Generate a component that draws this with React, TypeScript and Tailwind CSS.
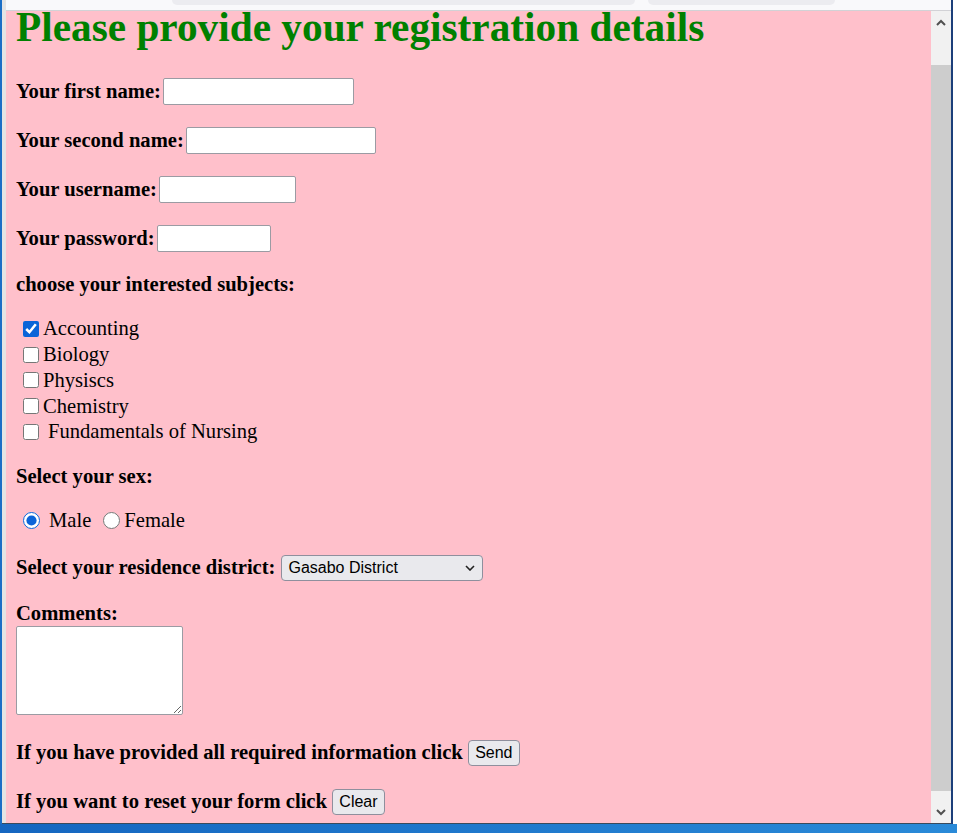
import { useState } from "react";

const subjects = ["Accounting", "Biology", "Physiscs", "Chemistry"];

function Chevron({ up }: { up?: boolean }) {
  return (
    <svg width="10" height="7" viewBox="0 0 10 7">
      <polyline
        points={up ? "1,6 5,2 9,6" : "1,1 5,5 9,1"}
        fill="none"
        stroke="#505050"
        strokeWidth="2"
      />
    </svg>
  );
}

export default function App() {
  const [checked, setChecked] = useState<string[]>(["Accounting"]);
  const [sex, setSex] = useState("male");

  const toggle = (s: string) =>
    setChecked((c) => (c.includes(s) ? c.filter((x) => x !== s) : [...c, s]));

  return (
    <div className="w-[957px] h-[833px] overflow-hidden flex flex-col bg-[#1a6ec6] font-['Liberation_Serif','Times_New_Roman',serif] text-black">
      <div className="h-[824px] flex bg-white">
        {/* window frame, left */}
        <div className="w-[2px] bg-[#1a6ec6]" />
        <div className="w-[4px] bg-[#e4e4e4] border-b border-[#3a4a5c]" />

        <div className="w-[945px] flex flex-col">
          {/* browser tab strip */}
          <div className="h-[11px] bg-[#f9f9fb] border-b border-[#d2d2d6] flex items-start">
            <div className="ml-[166px] w-[463px] h-[5px] bg-[#ececf0] rounded-b-[5px]" />
            <div className="ml-[13px] w-[187px] h-[5px] bg-[#ececf0] rounded-b-[5px]" />
          </div>

          <div className="flex-1 flex border-b border-[#3a4a5c]">
            {/* page */}
            <main className="w-[925px] bg-[#ffc0cb] px-[10px] flex flex-col">
              <h1 className="h-[32px] leading-[32px] text-[41.3px] font-bold text-[#008000] whitespace-nowrap">
                Please provide your registration details
              </h1>

              <div className="mt-[34px] h-[29px] flex items-center text-[20.6px] font-bold">
                <span>Your first name:</span>
                <input type="text" className="ml-[2px] w-[191px] h-[27px] bg-white border border-[#9b9ba3] rounded-[2px]" />
              </div>
              <div className="mt-[20px] h-[29px] flex items-center text-[20.6px] font-bold">
                <span>Your second name:</span>
                <input type="text" className="ml-[2px] w-[190px] h-[27px] bg-white border border-[#9b9ba3] rounded-[2px]" />
              </div>
              <div className="mt-[20px] h-[29px] flex items-center text-[20.6px] font-bold">
                <span>Your username:</span>
                <input type="text" className="ml-[2px] w-[137px] h-[27px] bg-white border border-[#9b9ba3] rounded-[2px]" />
              </div>
              <div className="mt-[20px] h-[29px] flex items-center text-[20.6px] font-bold">
                <span>Your password:</span>
                <input type="password" className="ml-[2px] w-[114px] h-[27px] bg-white border border-[#9b9ba3] rounded-[2px]" />
              </div>

              <p className="mt-[20px] h-[23px] leading-[23px] text-[20.6px] font-bold">
                choose your interested subjects:
              </p>

              <div className="mt-[20px] flex flex-col text-[20.6px]">
                {subjects.map((s) => (
                  <label key={s} className="h-[25.75px] flex items-center">
                    <input
                      type="checkbox"
                      checked={checked.includes(s)}
                      onChange={() => toggle(s)}
                      className="ml-[7px] mr-[4px] w-[16px] h-[16px] accent-[#0b64d8]"
                    />
                    <span>{s}</span>
                  </label>
                ))}
                <label className="h-[25.75px] flex items-center">
                  <input
                    type="checkbox"
                    checked={checked.includes("Fundamentals of Nursing")}
                    onChange={() => toggle("Fundamentals of Nursing")}
                    className="ml-[7px] mr-[9px] w-[16px] h-[16px] accent-[#0b64d8]"
                  />
                  <span>Fundamentals of Nursing</span>
                </label>
              </div>

              <p className="mt-[20px] h-[23px] leading-[23px] text-[20.6px] font-bold">Select your sex:</p>

              <div className="mt-[20px] h-[26px] flex items-center text-[20.6px]">
                <input
                  type="radio"
                  name="sex"
                  checked={sex === "male"}
                  onChange={() => setSex("male")}
                  className="ml-[7px] w-[17px] h-[17px] accent-[#0b64d8]"
                />
                <span className="ml-[9px]">Male</span>
                <input
                  type="radio"
                  name="sex"
                  checked={sex === "female"}
                  onChange={() => setSex("female")}
                  className="ml-[12px] w-[17px] h-[17px] accent-[#0b64d8]"
                />
                <span className="ml-[4px]">Female</span>
              </div>

              <div className="mt-[20px] h-[28px] flex items-center text-[20.6px]">
                <span className="font-bold">Select your residence district:</span>
                <div className="ml-[6px] w-[202px] h-[26px] relative">
                  <select className="block w-full h-full appearance-none bg-[#e9e9ed] border border-[#8f8f9d] rounded-[4px] pl-[6px] text-[16px] leading-[24px] font-['Liberation_Sans',Arial,sans-serif] text-black">
                    <option>Gasabo District</option>
                    <option>Kicukiro District</option>
                    <option>Nyarugenge District</option>
                  </select>
                  <span className="absolute right-[8px] top-[10px] pointer-events-none">
                    <svg width="10" height="6" viewBox="0 0 10 6">
                      <polyline points="1,1 5,5 9,1" fill="none" stroke="#222" strokeWidth="1.6" />
                    </svg>
                  </span>
                </div>
              </div>

              <p className="mt-[20px] h-[23px] leading-[23px] text-[20.6px] font-bold">Comments:</p>
              <textarea className="block mt-[1.25px] w-[167px] h-[89px] bg-white border border-[#9b9ba3] rounded-[2px] resize" />

              <div className="mt-[23px] h-[29px] flex items-center text-[20.6px]">
                <span className="font-bold">If you have provided all required information click</span>
                <button className="ml-[5px] w-[52px] h-[26px] bg-[#e9e9ed] border border-[#8f8f9d] rounded-[4px] text-[16px] font-['Liberation_Sans',Arial,sans-serif]">
                  Send
                </button>
              </div>
              <div className="mt-[20px] h-[29px] flex items-center text-[20.6px]">
                <span className="font-bold">If you want to reset your form click</span>
                <button className="ml-[5px] w-[53px] h-[26px] bg-[#e9e9ed] border border-[#8f8f9d] rounded-[4px] text-[16px] font-['Liberation_Sans',Arial,sans-serif]">
                  Clear
                </button>
              </div>
            </main>

            {/* scrollbar */}
            <div className="w-[20px] bg-[#f1f1f1] flex flex-col">
              <div className="h-[54px] flex justify-center pt-[8px]">
                <Chevron up />
              </div>
              <div className="h-[726px] bg-[#cdcdcd]" />
              <div className="flex-1 flex justify-center items-end pb-[7px]">
                <Chevron />
              </div>
            </div>
          </div>
        </div>

        {/* window frame, right */}
        <div className="w-[2px] bg-[#1c3f7a]" />
        <div className="w-[4px] bg-white" />
      </div>
      <div className="flex-1 bg-gradient-to-r from-[#1566c0] to-[#2a8ad8]" />
    </div>
  );
}
